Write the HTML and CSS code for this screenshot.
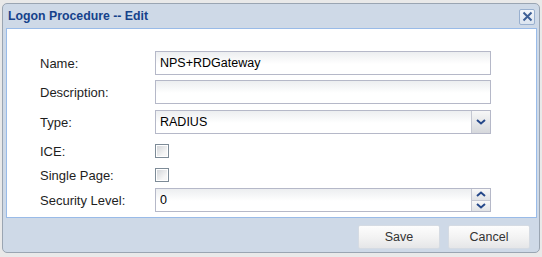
FILE: index.html
```html
<!DOCTYPE html>
<html lang="en">
<head>
  <meta charset="UTF-8" />
  <title>Logon Procedure -- Edit</title>
  <link rel="stylesheet" href="styles.css">
</head>
<body>
  <div class="window">
    <div class="win-header">
      <span class="win-title">Logon Procedure -- Edit</span>
      <span class="win-close">
        <svg width="11" height="11" viewBox="0 0 11 11"><path d="M1.5 1.5 L9.5 9.5 M9.5 1.5 L1.5 9.5" stroke="#3d5f96" stroke-width="2" fill="none"/></svg>
      </span>
    </div>

    <div class="win-body">
      <div class="row row-name">
        <label>Name:</label>
        <div class="field"><input type="text" value="NPS+RDGateway" /></div>
      </div>
      <div class="row row-desc">
        <label>Description:</label>
        <div class="field"><input type="text" value="" /></div>
      </div>
      <div class="row row-type">
        <label>Type:</label>
        <div class="field with-trigger">
          <input type="text" value="RADIUS" readonly />
          <span class="trigger">
            <svg width="10" height="6" viewBox="0 0 10 6"><path d="M1 1 L5 4.5 L9 1" stroke="#25488a" stroke-width="2" fill="none"/></svg>
          </span>
        </div>
      </div>
      <div class="row row-check">
        <label>ICE:</label>
        <span class="checkbox"></span>
      </div>
      <div class="row row-check row-single">
        <label>Single Page:</label>
        <span class="checkbox"></span>
      </div>
      <div class="row row-sec">
        <label>Security Level:</label>
        <div class="field with-trigger">
          <input type="text" value="0" />
          <span class="spinner">
            <span class="spin-up"><svg width="10" height="6" viewBox="0 0 10 6"><path d="M1 5 L5 1.5 L9 5" stroke="#25488a" stroke-width="2" fill="none"/></svg></span>
            <span class="spin-down"><svg width="10" height="6" viewBox="0 0 10 6"><path d="M1 1 L5 4.5 L9 1" stroke="#25488a" stroke-width="2" fill="none"/></svg></span>
          </span>
        </div>
      </div>
    </div>

    <div class="win-footer">
      <button class="btn">Save</button>
      <button class="btn">Cancel</button>
    </div>
  </div>
</body>
</html>
```

FILE: styles.css
```css
body { margin: 0; background: #e9e9e9; font-family: "Liberation Sans", Arial, sans-serif; font-size: 13px; color: #1e1e1e; }
.window { margin: 3px 0 0 2px; width: 536px; height: 248px; border: 1px solid #9aa5b2; border-radius: 5px; background: #ced9e7; display: flex; flex-direction: column; }
.win-header { height: 24px; display: flex; align-items: center; justify-content: space-between; padding: 0 4px 0 5px; }
.win-title { font-weight: bold; font-size: 12.3px; color: #15428b; }
.win-close { width: 14px; height: 14px; border: 1px solid #99b0cf; border-radius: 2px; background: linear-gradient(#f4f7fb, #dbe4ef); display: flex; align-items: center; justify-content: center; margin-top: 1px; }
.win-body { margin: 0 2px 0 3px; border: 1px solid #99bbe8; background: #fff; height: 166px; padding: 22px 0 0 33px; }
.row { display: flex; align-items: center; height: 24px; }
.row label { width: 115px; }
.row-name { margin-bottom: 5px; }
.row-desc { margin-bottom: 6px; }
.row-type { margin-bottom: 10px; }
.row-check { height: 14px; margin-bottom: 10px; }
.row-single { margin-bottom: 6px; }
.field { width: 336px; height: 24px; box-sizing: border-box; border: 1px solid #b5b8c8; background: linear-gradient(#eceef0, #fff 55%); display: flex; }
.field input { flex: 1; min-width: 0; border: 0; background: transparent; font-family: inherit; font-size: 12.5px; color: #000; padding: 0 4px; outline: none; }
.trigger { width: 18px; border-left: 1px solid #c4c7d2; background: linear-gradient(#f7f7f7, #d6d8dc); display: flex; align-items: center; justify-content: center; }
.spinner { width: 18px; border-left: 1px solid #c4c7d2; display: flex; flex-direction: column; }
.spinner span { flex: 1; display: flex; align-items: center; justify-content: center; background: linear-gradient(#f8f8f8, #e1e3e6); }
.spin-up { border-bottom: 1px solid #c4c7d2; }
.checkbox { width: 14px; height: 14px; box-sizing: border-box; border: 1px solid #7d8b97; background: linear-gradient(135deg, #cfd2d6, #f6f6f6 70%); box-shadow: inset 0 0 0 1px #fff; }
.win-footer { flex: 1; display: flex; justify-content: flex-end; align-items: flex-start; gap: 8px; padding: 7px 9px 0 0; }
.btn { width: 82px; height: 24px; border: 1px solid #d5dbe3; border-radius: 2px; background: linear-gradient(#fdfdfd, #f3f3f3 50%, #e5e6e8); font-family: inherit; font-size: 12.5px; color: #333; padding: 0; }
```
